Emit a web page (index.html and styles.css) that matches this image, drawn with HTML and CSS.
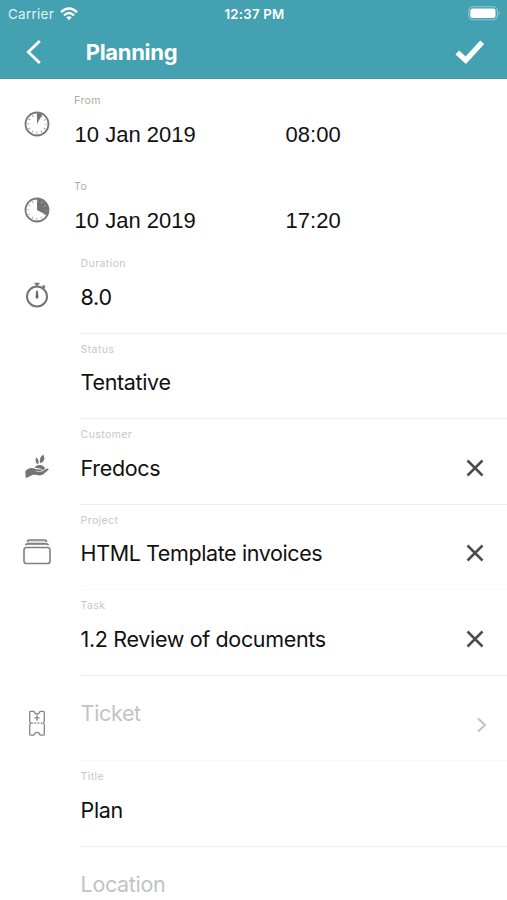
FILE: index.html
```html
<!DOCTYPE html>
<html lang="en">
<head>
<meta charset="utf-8">
<title>Planning</title>
<link rel="stylesheet" href="styles.css">
</head>
<body>
<header class="header">
  <div class="status">
    <div class="carrier"><span>Carrier</span>
      <svg width="18" height="14" viewBox="0 0 18 14"><g fill="none" stroke="#fff" stroke-width="2.4"><path d="M1 5.2Q9-2 17 5.2"/><path d="M4 8.3Q9 3.9 14 8.3"/></g><path d="M6.2 10.3Q9 8.1 11.8 10.3L9 13.2Z" fill="#fff"/></svg>
    </div>
    <span class="clock">12:37 PM</span>
    <svg class="battery" width="33" height="15" viewBox="0 0 33 15"><rect x=".8" y=".8" width="28.6" height="13" rx="4" fill="none" stroke="#fff" stroke-opacity=".4" stroke-width="1.1"/><rect x="2.3" y="2.5" width="25.2" height="9.5" rx="2.2" fill="#fff"/><path d="M30.6 5.2Q33 7.2 30.6 9.4Z" fill="#fff" fill-opacity=".4"/></svg>
  </div>
  <nav class="bar">
    <svg class="back" width="16" height="26" viewBox="0 0 16 26"><path d="M14.8 2L3.3 13L14.8 24" fill="none" stroke="#fff" stroke-width="2.8"/></svg>
    <h1>Planning</h1>
    <svg class="done" width="30" height="26" viewBox="0 0 30 26"><path d="M2.3 13.4L10.8 21.2L27.2 3.3" fill="none" stroke="#fff" stroke-width="5.4"/></svg>
  </nav>
</header>
<main class="form">
  <section class="row date first">
    <div class="icon"><svg width="28" height="28" viewBox="0 0 28 28"><circle cx="14" cy="14" r="11.5" fill="none" stroke="#777" stroke-width="1.8"/><circle cx="14" cy="14" r="8.8" fill="none" stroke="#999" stroke-width="2" stroke-dasharray="1 3.608" stroke-dashoffset=".5"/><path d="M14 14V3A11 11 0 0 1 19.2 4.6Z" fill="#737373"/></svg></div>
    <div class="field"><label>From</label><div class="pair"><span>10 Jan 2019</span><span>08:00</span></div></div>
  </section>
  <section class="row date">
    <div class="icon"><svg width="28" height="28" viewBox="0 0 28 28"><circle cx="14" cy="14" r="11.5" fill="none" stroke="#777" stroke-width="1.8"/><path d="M14 14V3A11 11 0 0 1 23.8 19.2Z" fill="#737373"/><circle cx="14" cy="14" r="8.8" fill="none" stroke="#aaa" stroke-width="2" stroke-dasharray="1 3.608" stroke-dashoffset=".5"/></svg></div>
    <div class="field"><label>To</label><div class="pair"><span>10 Jan 2019</span><span>17:20</span></div></div>
  </section>
  <section class="row">
    <div class="icon"><svg width="28" height="28" viewBox="0 0 28 28"><circle cx="14" cy="15.5" r="10" fill="none" stroke="#747474" stroke-width="2"/><path d="M11.5 2.6H16.5M14 2.6V6M19.8 4.6L22 6.2M20.8 5.5L19.7 7" fill="none" stroke="#747474" stroke-width="1.9"/><path d="M13.3 9.5H14.7L15.5 16A1.5 1.5 0 1 1 12.5 16Z" fill="#666"/></svg></div>
    <div class="field line"><label>Duration</label><p>8.0</p></div>
  </section>
  <section class="row">
    <div class="icon"></div>
    <div class="field line"><label>Status</label><p>Tentative</p></div>
  </section>
  <section class="row">
    <div class="icon"><svg width="28" height="28" viewBox="0 0 28 28"><g fill="#747474"><path d="M2.3 19.2C5.5 15.5 9.5 15.4 13 17.2L17.6 17.4C19.4 17.6 19.2 19.4 17.5 19.5H12.8L13 20.1H18L24 16.5C25.6 16 26 17.2 25 18.3L20.4 22.3C16.5 25 12.5 21.6 8.4 23.4L2.7 26.2Z"/><path d="M11.3 15.6Q13.2 12.6 16.8 13Q20.8 13 22.2 16.8L19.6 18.2Q18.6 16.6 16.5 16.5Z"/><path d="M14.8 12.4Q11.2 9.8 13.3 5.3Q17.2 9 14.8 12.4Z"/><path d="M17.4 11.2Q15.4 5.5 20.4 2.4Q23.2 9 17.4 11.2Z"/></g></svg></div>
    <div class="field line"><label>Customer</label><p>Fredocs</p></div>
    <svg class="clear" width="18" height="18" viewBox="0 0 18 18"><path d="M1.5 1.5L16.5 16.5M16.5 1.5L1.5 16.5"/></svg>
  </section>
  <section class="row">
    <div class="icon"><svg width="28" height="28" viewBox="0 0 28 28"><rect x="4" y="2" width="20" height="5" fill="#ddd"/><g fill="none" stroke="#808080" stroke-width="1.6"><rect x="1" y="9.5" width="26" height="16" rx="2.6"/><path d="M2.6 7.2Q3 5.9 4.3 5.9H23.7Q25 5.9 25.4 7.2"/><path d="M4.5 4Q4.5 2 6 2H22Q23.5 2 23.5 4"/></g></svg></div>
    <div class="field line faint"><label>Project</label><p class="project">HTML Template invoices</p></div>
    <svg class="clear" width="18" height="18" viewBox="0 0 18 18"><path d="M1.5 1.5L16.5 16.5M16.5 1.5L1.5 16.5"/></svg>
  </section>
  <section class="row">
    <div class="icon"></div>
    <div class="field line"><label>Task</label><p>1.2 Review of documents</p></div>
    <svg class="clear" width="18" height="18" viewBox="0 0 18 18"><path d="M1.5 1.5L16.5 16.5M16.5 1.5L1.5 16.5"/></svg>
  </section>
  <section class="row">
    <div class="icon"><svg width="28" height="28" viewBox="0 0 28 28"><g fill="none" stroke="#858585" stroke-width="1.3"><path d="M6.7 3.5Q6.7 2.3 8 2.3H10.8Q11.8 5 14 5T17.2 2.3H20Q21.3 2.3 21.3 3.5V12.2L20.5 14L21.3 15.8V25Q21.3 26.2 20 26.2H17.2Q16.2 23.4 14 23.4T10.8 26.2H8Q6.7 26.2 6.7 25V15.8L7.5 14L6.7 12.2Z"/><path d="M8 14.2H20" stroke-dasharray="2 1.2"/><path d="M14 6.2V11.8M11.4 8.8H16.6"/></g></svg></div>
    <div class="field line faint placeholder"><p>Ticket</p></div>
    <svg class="next" width="12" height="16" viewBox="0 0 12 16"><path d="M2 1.5L9 8L2 14.5" fill="none" stroke="#c4c4c4" stroke-width="2.2"/></svg>
  </section>
  <section class="row">
    <div class="icon"></div>
    <div class="field line"><label>Title</label><p>Plan</p></div>
  </section>
  <section class="row">
    <div class="icon"></div>
    <div class="field placeholder"><p>Location</p></div>
  </section>
</main>
</body>
</html>
```
FILE: styles.css
```css
* { box-sizing: border-box; }
html { height: 100%; overflow: hidden; }
body { margin: 0; height: 900px; overflow: hidden; background: #fff; color: #111; font-family: Inter, "Liberation Sans", sans-serif; }
svg { display: block; flex: none; }
.header { height: 79px; background: #44a1b2; color: #fff; border-bottom: 1px solid #3f9bac; }
.status { height: 27px; display: grid; grid-template-columns: 1fr auto 1fr; align-items: center; padding: 0 6px 0 8px; font-size: 13.4px; }
.carrier { display: flex; align-items: center; gap: 6px; color: #e3f4f7; letter-spacing: .3px; }
.clock { font-weight: 600; font-size: 13.2px; letter-spacing: .25px; }
.battery { justify-self: end; }
.bar { height: 50px; display: flex; align-items: center; padding: 0 22px 0 25px; }
.bar h1 { margin: 0 auto 0 44.7px; font-size: 22px; line-height: 28px; font-weight: 700; letter-spacing: -.3px; }
.form { margin-top: -2px; }
.row { height: 85.5px; display: flex; position: relative; }
.icon { width: 74.6px; flex: none; display: flex; align-items: center; justify-content: center; padding: 9px .6px 0 0; }
.field { flex: 1; margin-left: 6px; padding-top: 9px; min-width: 0; }
.field label { display: block; font-size: 10.5px; line-height: 14px; height: 14px; color: #c6c6c8; letter-spacing: .4px; margin-bottom: 11.5px; }
.field p { margin: 0; font-size: 21.5px; line-height: 28px; letter-spacing: -.34px; white-space: nowrap; }
.field .project { letter-spacing: -.4px; }
.line { border-bottom: 1px solid #ededed; }
.faint { border-bottom-color: #f7f7f7; }
.date .field { margin-left: 0; padding-top: 17px; }
.date label { color: #aaa; margin-bottom: 13px; margin-left: -.5px; }
.pair { display: grid; grid-template-columns: 211px 1fr; font: 22px/28px "Liberation Sans", sans-serif; }
.field.placeholder { padding-top: 23px; }
.placeholder p { color: #c3c3c5; }
.clear { position: absolute; right: 23px; top: 39.5px; fill: none; stroke: #4c4c4c; stroke-width: 2.5; }
.next { position: absolute; right: 19px; top: 41px; }
```
